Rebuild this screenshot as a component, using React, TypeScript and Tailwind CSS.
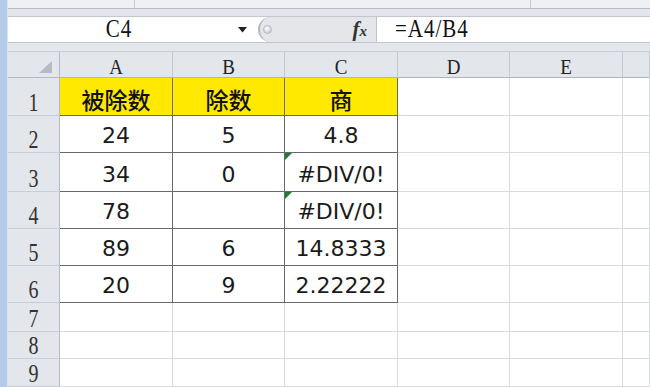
import React from "react";

const cols = ["A", "B", "C", "D", "E", ""];
const rowHeights = ["h-[38px]", "h-[37px]", "h-[39px]", "h-[37px]", "h-[37px]", "h-[37px]", "h-[29px]", "h-[27px]", "h-[28px]"];

const data: string[][] = [
  ["被除数", "除数", "商"],
  ["24", "5", "4.8"],
  ["34", "0", "#DIV/0!"],
  ["78", "", "#DIV/0!"],
  ["89", "6", "14.8333"],
  ["20", "9", "2.22222"],
];

const colWidths = ["w-[113px]", "w-[112px]", "w-[113px]", "w-[112px]", "w-[113px]", "flex-1"];

function Cell({ r, c }: { r: number; c: number }) {
  const inTable = r < 6 && c < 3;
  const text = inTable ? data[r][c] : "";
  const yellow = r === 0 && c < 3;
  const err = c === 2 && (r === 2 || r === 3);
  const border = inTable ? "border-[#666a6e]" : "border-[#d9dbdd]";
  return (
    <div
      className={`${colWidths[c]} shrink-0 h-full relative flex items-end justify-center border-r border-b ${border} ${
        yellow ? "bg-[#ffe900]" : "bg-white"
      } ${r === 0 ? "pb-[4px]" : "pb-[5px]"}`}
    >
      {err && (
        <div className="absolute top-0 left-0 w-0 h-0 border-t-[7px] border-r-[7px] border-t-[#1d7d2a] border-r-transparent" />
      )}
      {text &&
        (r === 0 ? (
          <span className="font-['Noto_Sans_CJK_SC',sans-serif] font-medium text-[23px] leading-none text-[#111]">{text}</span>
        ) : (
          <span className="font-['DejaVu_Sans',sans-serif] text-[22px] leading-none text-[#1a1a1a]">{text}</span>
        ))}
    </div>
  );
}

export default function App() {
  return (
    <div className="w-[650px] h-[387px] overflow-hidden flex bg-white">
      <div className="w-[8px] shrink-0 h-full bg-[#b3cbe8] border-r border-[#d3e1f1]" />
      <div className="flex-1 flex flex-col min-w-0">
        {/* top ribbon edge */}
        <div className="h-[8px] flex bg-[#eef0f3]">
          <div className="w-[127px] border-r border-[#c6cad0]" />
          <div className="w-[396px] border-r border-[#c6cad0]" />
          <div className="flex-1" />
        </div>
        <div className="h-[8px] bg-[#e2e5e9] border-t border-[#b9bec5]" />
        {/* formula bar */}
        <div className="h-[27px] flex bg-white border-y border-[#c3c7cd]">
          <div className="w-[250px] shrink-0 flex items-center">
            <span className="flex-1 text-center font-['Liberation_Serif',serif] text-[21px] leading-none tracking-[1px] text-[#111] inline-block scale-y-[1.15] pr-[8px]">
              C4
            </span>
            <svg width="9" height="6" viewBox="0 0 9 6" className="mr-[11px]">
              <path d="M0 0 L9 0 L4.5 5.5 Z" fill="#222" />
            </svg>
          </div>
          <div className="w-[119px] shrink-0 h-full flex items-center bg-[#e4e6e9] rounded-l-full border-l-2 border-[#b3b8bf] border-r border-r-[#c0c4ca] relative">
            <div className="ml-[3px] w-[9px] h-[9px] rounded-full bg-[radial-gradient(circle_at_40%_35%,#ffffff,#b9bdc3)] border border-[#b5b9bf]" />
            <div className="flex-1" />
            <span className="mr-[9px] font-['Liberation_Serif',serif] italic font-bold text-[21px] leading-none text-[#333]">
              f<span className="text-[15px]">x</span>
            </span>
          </div>
          <div className="flex-1 flex items-center pl-[18px]">
            <span className="font-['Liberation_Serif',serif] text-[21px] leading-none tracking-[1px] text-[#111] inline-block scale-y-[1.15]">
              =A4/B4
            </span>
          </div>
        </div>
        <div className="h-[9px] bg-[#e3e6ea] border-b border-[#c9cdd2]" />
        {/* column header */}
        <div className="h-[26px] flex shrink-0">
          <div className="w-[52px] shrink-0 h-full bg-[#e3e6ea] border-r border-b border-[#b4bac2] flex items-end justify-end pr-[7px] pb-[4px]">
            <svg width="13" height="12" viewBox="0 0 13 12">
              <path d="M13 0 L13 12 L0 12 Z" fill="#b7bbc1" />
            </svg>
          </div>
          {cols.map((c, i) => (
            <div
              key={i}
              className={`${colWidths[i]} shrink-0 h-full bg-[#e3e6ea] border-r border-[#c4c9cf] border-b border-b-[#aeb4bc] flex items-center justify-center pt-[3px]`}
            >
              <span className="font-['Liberation_Serif',serif] text-[19px] leading-none text-[#222] inline-block scale-y-[1.1]">
                {c}
              </span>
            </div>
          ))}
        </div>
        {rowHeights.map((h, r) => (
          <div key={r} className={`${h} flex shrink-0`}>
            <div className="w-[52px] shrink-0 h-full bg-[#e3e6ea] border-r border-[#b4bac2] border-b border-b-[#c9cdd3] flex items-end justify-center pb-[4px]">
              <span className="font-['Liberation_Serif',serif] text-[20px] leading-[17px] text-[#333] inline-block scale-y-[1.25]">
                {r + 1}
              </span>
            </div>
            {cols.map((_, c) => (
              <Cell key={c} r={r} c={c} />
            ))}
          </div>
        ))}
      </div>
    </div>
  );
}
